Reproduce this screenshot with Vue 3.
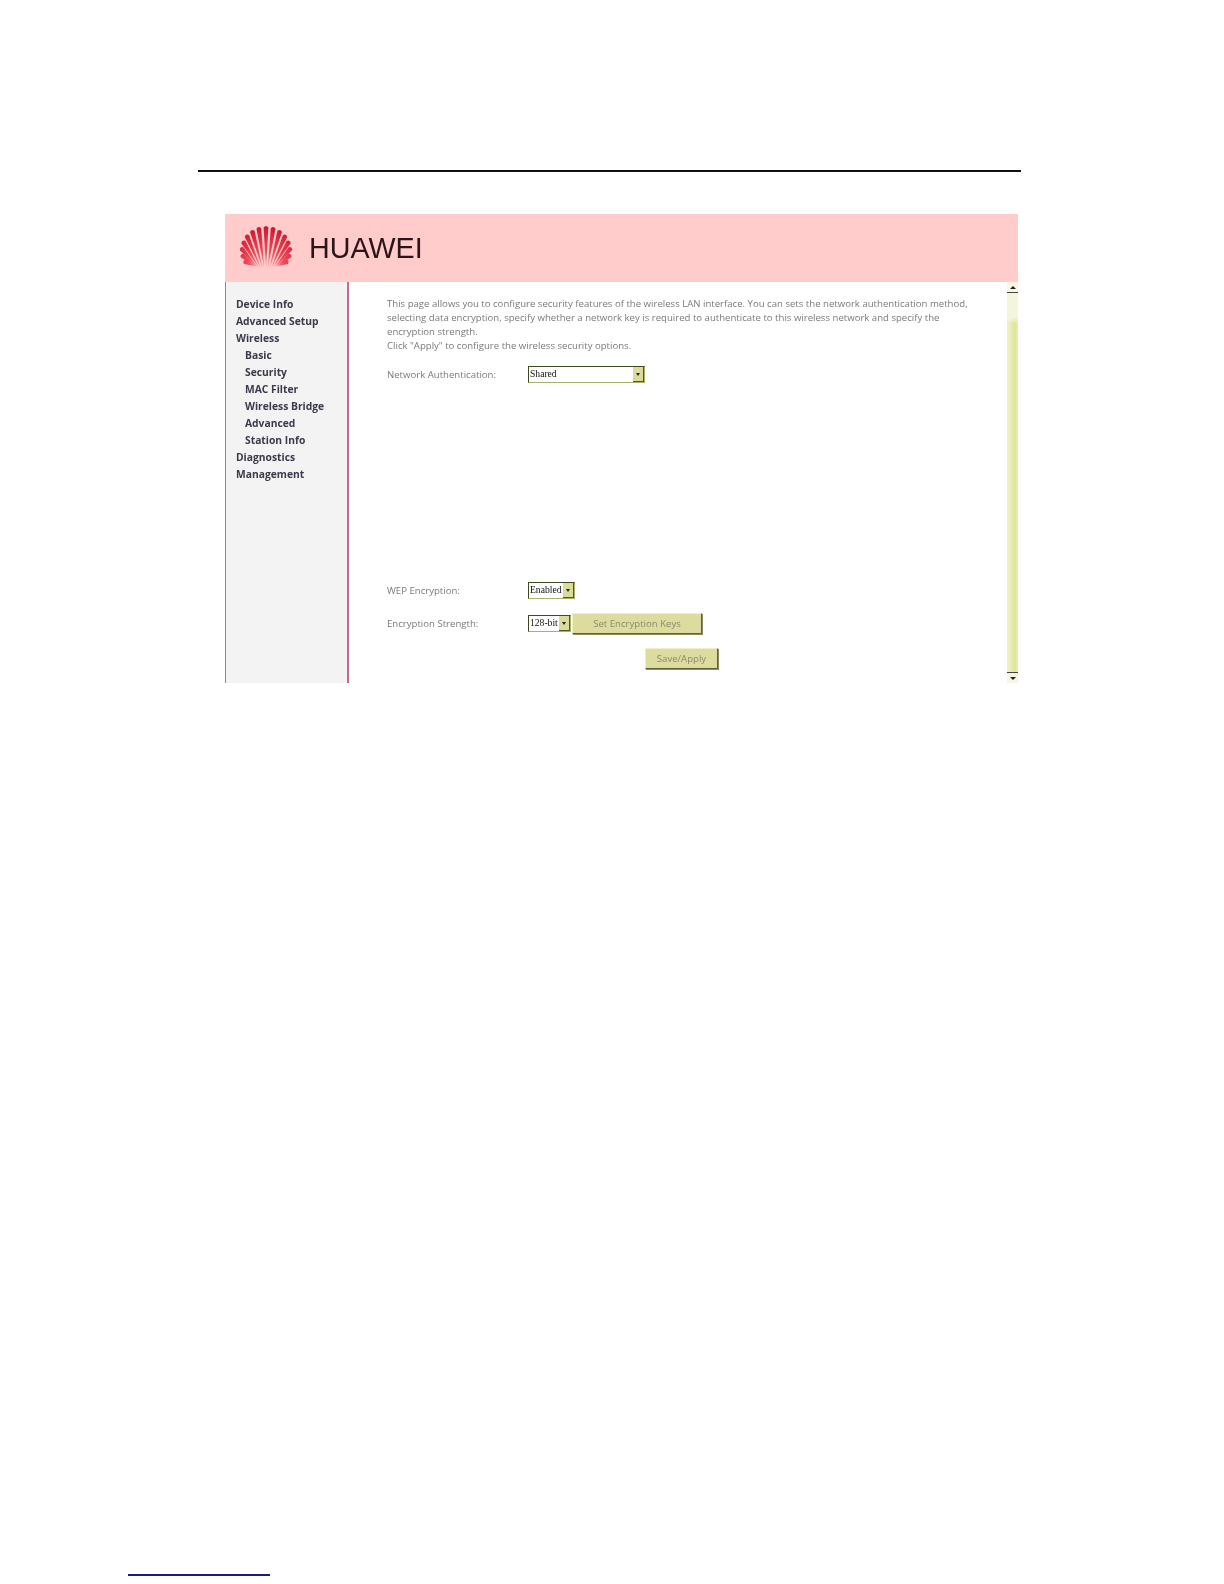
<script setup>
import { computed } from 'vue'

const nav = [
  { label: 'Device Info' },
  { label: 'Advanced Setup' },
  { label: 'Wireless' },
  { label: 'Basic', sub: true },
  { label: 'Security', sub: true },
  { label: 'MAC Filter', sub: true },
  { label: 'Wireless Bridge', sub: true },
  { label: 'Advanced', sub: true },
  { label: 'Station Info', sub: true },
  { label: 'Diagnostics' },
  { label: 'Management' }
]

const petals = computed(() => {
  const out = []
  const n = 15
  for (let i = 0; i < n; i++) {
    const t = (i / (n - 1)) * 2 - 1
    const a = (t * 116 * Math.PI) / 180
    const ox = 27 + 26.5 * Math.sin(a)
    const oy = 25.5 - 25 * Math.cos(a)
    const ix = 27 + 12 * t
    const iy = 45 - 3 * t * t
    const dx = ox - ix
    const dy = oy - iy
    const len = Math.hypot(dx, dy)
    const nx = -dy / len
    const ny = dx / len
    const w = 2.4
    const sx = ox - (dx / len) * 3
    const sy = oy - (dy / len) * 3
    const d = `M${ix.toFixed(2)} ${iy.toFixed(2)} L${(sx + nx * w).toFixed(2)} ${(sy + ny * w).toFixed(2)} Q${ox.toFixed(2)} ${oy.toFixed(2)} ${(sx - nx * w).toFixed(2)} ${(sy - ny * w).toFixed(2)} Z`
    out.push(d)
  }
  return out
})
</script>

<template>
  <div class="page">
    <div class="top-rule"></div>
    <div class="shot">
      <header class="banner">
        <svg class="logo" width="54" height="46" viewBox="0 0 54 46">
          <defs>
            <radialGradient id="fan" gradientUnits="userSpaceOnUse" cx="27" cy="46" r="44">
              <stop offset="0" stop-color="#f9b4b6" />
              <stop offset="0.45" stop-color="#ea4a58" />
              <stop offset="1" stop-color="#cc1530" />
            </radialGradient>
          </defs>
          <path v-for="(d, i) in petals" :key="i" :d="d" fill="url(#fan)" />
        </svg>
        <span class="brand">HUAWEI</span>
      </header>
      <div class="body">
        <nav class="side">
          <div v-for="item in nav" :key="item.label" class="nav-item" :class="{ sub: item.sub }">{{ item.label }}</div>
        </nav>
        <main class="main">
          <p class="intro">
            This page allows you to configure security features of the wireless LAN interface. You can sets the network authentication method,<br />
            selecting data encryption, specify whether a network key is required to authenticate to this wireless network and specify the<br />
            encryption strength.<br />
            Click "Apply" to configure the wireless security options.
          </p>
          <div class="row auth">
            <span class="label">Network Authentication:</span>
            <div class="select wide"><span class="value">Shared</span><span class="arrow"><i></i></span></div>
          </div>
          <div class="row wep">
            <span class="label">WEP Encryption:</span>
            <div class="select mid"><span class="value">Enabled</span><span class="arrow"><i></i></span></div>
          </div>
          <div class="row strength">
            <span class="label">Encryption Strength:</span>
            <div class="select small"><span class="value">128-bit</span><span class="arrow"><i></i></span></div>
            <button class="btn keys">Set Encryption Keys</button>
          </div>
          <div class="row save">
            <button class="btn apply">Save/Apply</button>
          </div>
        </main>
        <div class="scrollbar">
          <div class="scroll-cap"><i class="up"></i></div>
          <div class="scroll-track"></div>
          <div class="scroll-cap bottom"><i class="down"></i></div>
        </div>
      </div>
    </div>
    <div class="foot-rule"></div>
  </div>
</template>

<style scoped>
.page {
  width: 1224px;
  height: 1584px;
  box-sizing: border-box;
  padding-top: 170px;
  background: #fff;
  overflow: hidden;
}
.top-rule {
  width: 823px;
  height: 2px;
  margin-left: 198px;
  background: #111;
}
.shot {
  width: 793px;
  height: 469px;
  margin: 42px 0 0 225px;
  display: flex;
  flex-direction: column;
  filter: blur(0.45px);
}
.banner {
  height: 68px;
  flex: none;
  display: flex;
  align-items: center;
  background: #ffcbcb;
}
.logo {
  margin-left: 14px;
  margin-top: -3px;
}
.brand {
  margin-left: 16px;
  font: 400 28.7px "Liberation Sans", sans-serif;
  color: #2a1518;
}
.body {
  flex: 1;
  min-height: 0;
  display: flex;
}
.side {
  width: 121px;
  flex: none;
  padding-top: 13.5px;
  background: #f3f3f3;
  border-left: 1px solid #c66a88;
  border-right: 2px solid #c66a88;
}
.nav-item {
  height: 17px;
  padding-left: 10px;
  font: 700 10.3px/17px "Open Sans", sans-serif;
  color: #3a3a4a;
  white-space: nowrap;
}
.nav-item.sub {
  padding-left: 19px;
}
.main {
  flex: 1;
  min-width: 0;
  padding: 15px 0 0 38px;
  font: 400 9.6px/14px "Open Sans", sans-serif;
  color: #7a7a7a;
}
.intro {
  margin: 0;
  white-space: nowrap;
}
.row {
  display: flex;
  align-items: center;
}
.label {
  width: 141px;
  flex: none;
}
.auth {
  margin-top: 13px;
}
.wep {
  margin-top: 199px;
}
.strength {
  margin-top: 14px;
}
.save {
  margin-top: 14px;
  padding-left: 258px;
}
.select {
  height: 17px;
  box-sizing: border-box;
  display: flex;
  justify-content: space-between;
  border: 1px solid #3c4a20;
  border-right-color: #aab070;
  border-bottom-color: #aab070;
  background: #fff;
}
.value {
  padding-left: 1px;
  font: 400 9.6px/13px "Liberation Serif", serif;
  color: #111;
  white-space: nowrap;
}
.arrow {
  width: 10px;
  flex: none;
  background: #dcdc9a;
  border-right: 1px solid #4e5a20;
  border-bottom: 1px solid #4e5a20;
  display: flex;
  align-items: center;
  justify-content: center;
}
.arrow i {
  width: 0;
  height: 0;
  border: 2.5px solid transparent;
  border-top: 3px solid #222;
  border-bottom: 0;
}
.wide { width: 117px; }
.mid { width: 47px; }
.small { width: 43px; }
.btn {
  height: 21px;
  box-sizing: border-box;
  padding: 0;
  background: #dcdc9e;
  border: 1px solid;
  border-color: #f0f0c8 #5f6238 #5f6238 #f0f0c8;
  box-shadow: 1px 1px 0 #8b8c60;
  font: 400 9.6px "Open Sans", sans-serif;
  color: #8a8a70;
}
.keys {
  width: 130px;
  margin-left: 1px;
}
.apply {
  width: 73px;
}
.scrollbar {
  width: 11px;
  flex: none;
  display: flex;
  flex-direction: column;
  background: linear-gradient(90deg, #f2f2cf, #e0e698 70%, #e8eab8);
}
.scroll-cap {
  height: 10px;
  flex: none;
  display: flex;
  align-items: center;
  justify-content: center;
  border-bottom: 1px solid #444;
  background: #f6f6e2;
}
.scroll-cap.bottom {
  border-bottom: 0;
  border-top: 1px solid #444;
}
.scroll-cap i {
  width: 0;
  height: 0;
  border: 3px solid transparent;
}
.scroll-cap .up {
  border-top: 0;
  border-bottom: 3px solid #222;
}
.scroll-cap .down {
  border-bottom: 0;
  border-top: 3px solid #222;
}
.scroll-track {
  flex: 1;
  background: linear-gradient(#f4f6dc 0, #f4f6dc 24px, transparent 30px);
}
.foot-rule {
  width: 142px;
  height: 2px;
  margin: 891px 0 0 128px;
  background: #1a1a8c;
}
</style>
